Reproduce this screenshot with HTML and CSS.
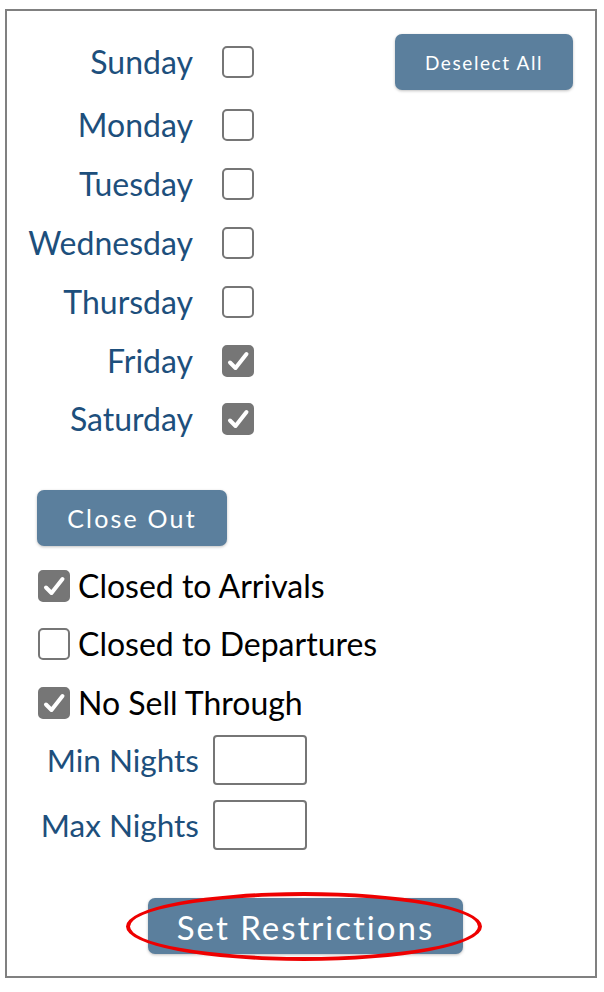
FILE: index.html
```html
<!DOCTYPE html>
<html>
<head>
<meta charset="utf-8">
<link rel="stylesheet" href="styles.css">
</head>
<body>
<div class="panel">
  <div class="days">
    <span class="day-label">Sunday</span><span class="box"></span>
    <div class="deselect-cell"><button class="btn btn-small">Deselect All</button></div>
    <span class="day-label">Monday</span><span class="box"></span>
    <span class="day-label">Tuesday</span><span class="box"></span>
    <span class="day-label">Wednesday</span><span class="box"></span>
    <span class="day-label">Thursday</span><span class="box"></span>
    <span class="day-label">Friday</span><span class="box checked"><svg viewBox="0 0 28 28"><path d="M6 15.5l5.5 5.5L22.5 7" /></svg></span>
    <span class="day-label">Saturday</span><span class="box checked"><svg viewBox="0 0 28 28"><path d="M6 15.5l5.5 5.5L22.5 7" /></svg></span>
  </div>

  <div class="closeout">
    <button class="btn btn-medium">Close Out</button>
    <div class="options">
      <div class="option"><span class="box checked"><svg viewBox="0 0 28 28"><path d="M6 15.5l5.5 5.5L22.5 7" /></svg></span><span class="opt-label">Closed to Arrivals</span></div>
      <div class="option"><span class="box"></span><span class="opt-label">Closed to Departures</span></div>
      <div class="option"><span class="box checked"><svg viewBox="0 0 28 28"><path d="M6 15.5l5.5 5.5L22.5 7" /></svg></span><span class="opt-label">No Sell Through</span></div>
    </div>
  </div>

  <div class="nights">
    <span class="day-label nights-label">Min Nights</span><span class="field"></span>
    <span class="day-label nights-label">Max Nights</span><span class="field"></span>
  </div>

  <div class="submit-row">
    <div class="submit-wrap">
      <button class="btn btn-large">Set Restrictions</button>
      <span class="highlight"></span>
    </div>
  </div>
</div>
</body>
</html>
```

FILE: styles.css
```css
* { box-sizing: border-box; }
html, body { margin: 0; padding: 0; background: #ffffff; }
body { font-family: Lato, "Open Sans", sans-serif; }

.panel {
  margin: 9px 0 0 5px;
  width: 592px;
  height: 969px;
  border: 2px solid #808080;
  padding: 17px 22px 0 0;
}

.days {
  display: grid;
  grid-template-columns: 186px 32px 1fr;
  grid-template-rows: 68px;
  grid-auto-rows: 58.8px;
  column-gap: 29px;
  align-items: center;
}
.days .day-label { grid-column: 1; }
.days .box { grid-column: 2; }
.deselect-cell { grid-column: 3; grid-row: 1; display: flex; justify-content: flex-end; }

.day-label {
  text-align: right;
  color: #1d4f7c;
  font-size: 32px;
  line-height: 1;
  white-space: nowrap;
}
.nights-label { font-size: 31.5px; }

.box {
  width: 32px;
  height: 32px;
  border: 2px solid #767676;
  border-radius: 5px;
  display: block;
  background: #fff;
}
.box.checked { background: #767676; }
.box svg { width: 28px; height: 28px; display: block; }
.box svg path { fill: none; stroke: #fff; stroke-width: 4; stroke-linecap: round; stroke-linejoin: round; }

.btn {
  font-family: Lato, "Open Sans", sans-serif;
  background: #5b7f9d;
  color: #ffffff;
  border: none;
  border-radius: 7px;
  box-shadow: 0 1px 3px rgba(0,0,0,0.25);
  padding: 0;
  cursor: pointer;
}
.btn-small { width: 178px; height: 56px; font-size: 19px; letter-spacing: 1.6px; }
.btn-medium { width: 190px; height: 56px; font-size: 25px; letter-spacing: 2.2px; }
.btn-large { width: 315px; height: 56px; font-size: 33px; letter-spacing: 2px; padding-top: 2px; }

.closeout { padding-left: 30px; margin-top: 41px; }
.options { margin-top: 10.7px; }
.option {
  height: 58.5px;
  display: flex;
  align-items: center;
  gap: 8px;
  padding-left: 1px;
}
.opt-label { font-size: 32px; color: #000; line-height: 1; white-space: nowrap; }

.nights {
  display: grid;
  grid-template-columns: 192px 94px;
  grid-auto-rows: 65px;
  column-gap: 14px;
  align-items: center;
  margin-top: -4px;
}
.field {
  display: block;
  width: 94px;
  height: 50px;
  border: 2px solid #767676;
  border-radius: 4px;
}

.submit-row { margin-top: 40px; padding-left: 141px; }
.submit-wrap { position: relative; width: 315px; height: 56px; }
.highlight {
  position: absolute;
  left: -22px;
  top: -6px;
  width: 356px;
  height: 69px;
  border: 4px solid #ee0000;
  border-radius: 50%;
  pointer-events: none;
}
```
